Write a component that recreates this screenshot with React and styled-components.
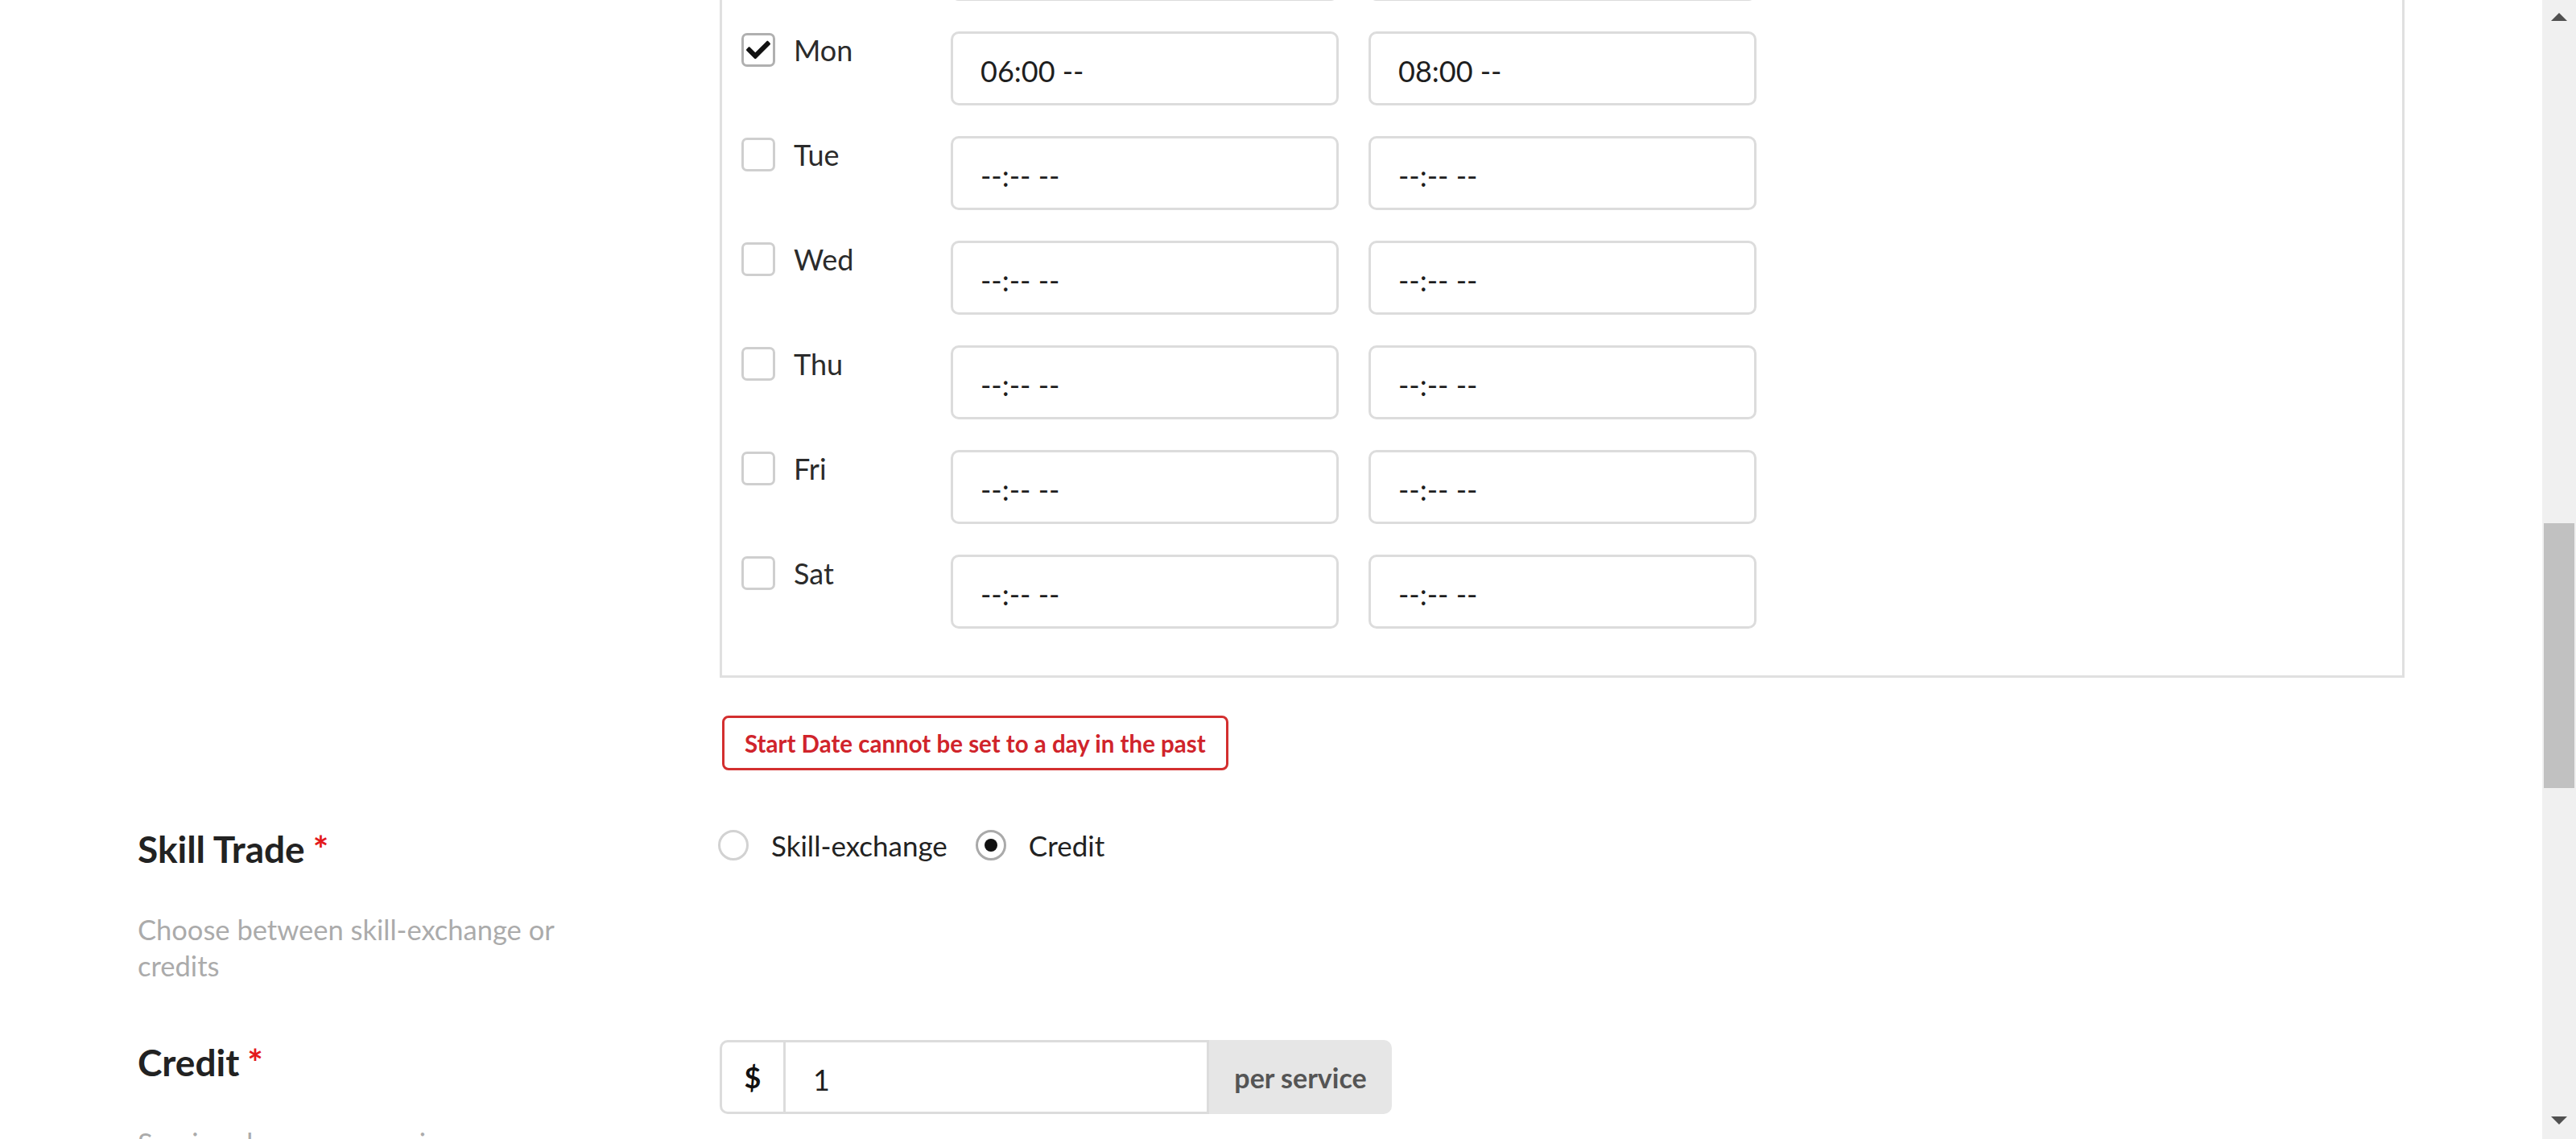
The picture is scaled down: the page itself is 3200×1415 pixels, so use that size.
import React, { useLayoutEffect, useRef } from "react";
import styled, { createGlobalStyle } from "styled-components";
import { FaCheck } from "react-icons/fa";

const GlobalStyle = createGlobalStyle`
  html, body {
    margin: 0;
    padding: 0;
    height: 100%;
    overflow: hidden;
    background: #fff;
  }
  body {
    font-family: Lato, "Noto Sans", sans-serif;
    color: #222;
  }
  * {
    box-sizing: border-box;
  }
`;

const Page = styled.div`
  display: flex;
  width: 100vw;
  height: 100vh;
`;

const Viewport = styled.div`
  flex: 1;
  height: 100%;
  overflow-y: auto;
  scrollbar-width: none;
  &::-webkit-scrollbar {
    display: none;
  }
`;

const Container = styled.div`
  padding: 80px 171px 700px;
`;

const FormRow = styled.div`
  display: grid;
  grid-template-columns: 723px 1fr;
  align-items: start;
  & + & {
    margin-top: 70px;
  }
`;

const LabelCol = styled.div`
  padding-right: 100px;
`;

const Label = styled.h3`
  margin: 0;
  font-size: 46px;
  line-height: 55px;
  font-weight: 700;
  color: #222;
`;

const Required = styled.span`
  color: #e3191c;
  margin-left: 10px;
`;

const Help = styled.p`
  margin: 50px 0 0;
  max-width: 580px;
  font-size: 34.5px;
  line-height: 45px;
  color: #ababab;
`;

const Schedule = styled.div`
  border: 3px solid #e0e0e0;
  padding: 40px 24px 58px;
  display: flex;
  flex-direction: column;
  gap: 38px;
`;

const DayRow = styled.div`
  display: flex;
  align-items: flex-start;
`;

const DayCheck = styled.label`
  width: 260px;
  padding-top: 2px;
  display: flex;
  align-items: flex-start;
  gap: 23px;
`;

const Box = styled.span`
  width: 42px;
  height: 42px;
  border: 3px solid ${(p) => (p.$checked ? "#b0b0b0" : "#cfcfcf")};
  border-radius: 7px;
  display: flex;
  align-items: center;
  justify-content: center;
  color: #111;
  flex-shrink: 0;
`;

const DayName = styled.span`
  font-size: 36px;
  line-height: 43px;
  color: #2b2b2b;
`;

const Times = styled.div`
  display: flex;
  gap: 37px;
`;

const TimeField = styled.input`
  width: 482px;
  height: 92px;
  border: 3px solid #dcdcdc;
  border-radius: 10px;
  padding: 6px 34px 0;
  font-family: Lato, "Noto Sans", sans-serif;
  font-size: 36px;
  color: #1e1e1e;
  background: #fff;
  outline: none;
`;

const ErrorBox = styled.div`
  display: inline-flex;
  align-items: center;
  height: 68px;
  margin: 47px 0 0 3px;
  padding: 0 25px;
  border: 3px solid #d32f2f;
  border-radius: 8px;
  font-size: 29.5px;
  font-weight: 700;
  color: #d0242b;
`;

const RadioGroup = styled.div`
  display: flex;
  align-items: center;
  height: 46px;
  margin-left: -2px;
`;

const RadioOption = styled.label`
  display: flex;
  align-items: center;
  gap: 28px;
  margin-right: 35px;
  font-size: 35px;
  color: #222;
`;

const RadioCircle = styled.span`
  width: 38px;
  height: 38px;
  border-radius: 50%;
  border: 3px solid ${(p) => (p.$checked ? "#aaaaaa" : "#d2d2d2")};
  display: flex;
  align-items: center;
  justify-content: center;
  &::after {
    content: "";
    width: 16px;
    height: 16px;
    border-radius: 50%;
    background: ${(p) => (p.$checked ? "#111" : "transparent")};
  }
`;

const InputGroup = styled.div`
  display: flex;
  width: 835px;
  height: 92px;
`;

const Prefix = styled.span`
  width: 82px;
  display: flex;
  align-items: center;
  justify-content: center;
  border: 3px solid #dcdcdc;
  border-radius: 10px 0 0 10px;
  font-size: 36px;
  font-weight: 700;
  color: #111;
`;

const Amount = styled.input`
  flex: 1;
  min-width: 0;
  border: 3px solid #dcdcdc;
  border-left: none;
  padding: 6px 34px 0;
  font-family: Lato, "Noto Sans", sans-serif;
  font-size: 36px;
  color: #1e1e1e;
  outline: none;
`;

const Suffix = styled.span`
  width: 227px;
  display: flex;
  align-items: center;
  justify-content: center;
  background: #e6e6e6;
  border-radius: 0 10px 10px 0;
  font-size: 34px;
  font-weight: 700;
  color: #555;
`;

const Scrollbar = styled.div`
  width: 42px;
  flex-shrink: 0;
  background: #f0f0f0;
  display: flex;
  flex-direction: column;
  align-items: center;
`;

const ArrowCell = styled.div`
  height: 42px;
  width: 100%;
  display: flex;
  justify-content: center;
  align-items: ${(p) => (p.$down ? "flex-end" : "flex-start")};
  padding: ${(p) => (p.$down ? "0 0 18px" : "16px 0 0")};
  &::before {
    content: "";
    border-left: 10px solid transparent;
    border-right: 10px solid transparent;
    ${(p) =>
      p.$down ? "border-top: 10px solid #505050;" : "border-bottom: 10px solid #505050;"}
  }
`;

const Rail = styled.div`
  flex: 1;
  width: 100%;
  padding-left: 2px;
`;

const Thumb = styled.div`
  margin-top: 608px;
  width: 38px;
  height: 329px;
  background: #c1c1c1;
`;

const days = [
  { name: "Sun", from: "--:-- --", to: "--:-- --" },
  { name: "Mon", from: "06:00 --", to: "08:00 --", checked: true },
  { name: "Tue", from: "--:-- --", to: "--:-- --" },
  { name: "Wed", from: "--:-- --", to: "--:-- --" },
  { name: "Thu", from: "--:-- --", to: "--:-- --" },
  { name: "Fri", from: "--:-- --", to: "--:-- --" },
  { name: "Sat", from: "--:-- --", to: "--:-- --" },
];

export default function App() {
  const viewRef = useRef(null);
  const monRef = useRef(null);

  useLayoutEffect(() => {
    const v = viewRef.current;
    const m = monRef.current;
    v.scrollTop = 0;
    const off = m.getBoundingClientRect().top - v.getBoundingClientRect().top;
    v.scrollTop = off - 39;
  }, []);

  return (
    <Page>
      <GlobalStyle />
      <Viewport ref={viewRef}>
        <Container>
          <FormRow>
            <LabelCol>
              <Label>
                Availability <Required>*</Required>
              </Label>
            </LabelCol>
            <div>
              <Schedule>
                {days.map((d) => (
                  <DayRow key={d.name} ref={d.name === "Mon" ? monRef : null}>
                    <DayCheck>
                      <Box $checked={d.checked}>
                        {d.checked && <FaCheck size={30} />}
                      </Box>
                      <DayName>{d.name}</DayName>
                    </DayCheck>
                    <Times>
                      <TimeField type="text" readOnly value={d.from} />
                      <TimeField type="text" readOnly value={d.to} />
                    </Times>
                  </DayRow>
                ))}
              </Schedule>
              <ErrorBox>Start Date cannot be set to a day in the past</ErrorBox>
            </div>
          </FormRow>

          <FormRow>
            <LabelCol>
              <Label>
                Skill Trade<Required>*</Required>
              </Label>
              <Help>Choose between skill-exchange or credits</Help>
            </LabelCol>
            <RadioGroup>
              <RadioOption>
                <RadioCircle />
                Skill-exchange
              </RadioOption>
              <RadioOption>
                <RadioCircle $checked />
                Credit
              </RadioOption>
            </RadioGroup>
          </FormRow>

          <FormRow>
            <LabelCol>
              <Label>
                Credit<Required>*</Required>
              </Label>
              <Help>Service charge per session</Help>
            </LabelCol>
            <InputGroup>
              <Prefix>$</Prefix>
              <Amount type="text" readOnly value="1" />
              <Suffix>per service</Suffix>
            </InputGroup>
          </FormRow>
        </Container>
      </Viewport>
      <Scrollbar>
        <ArrowCell />
        <Rail>
          <Thumb />
        </Rail>
        <ArrowCell $down />
      </Scrollbar>
    </Page>
  );
}
